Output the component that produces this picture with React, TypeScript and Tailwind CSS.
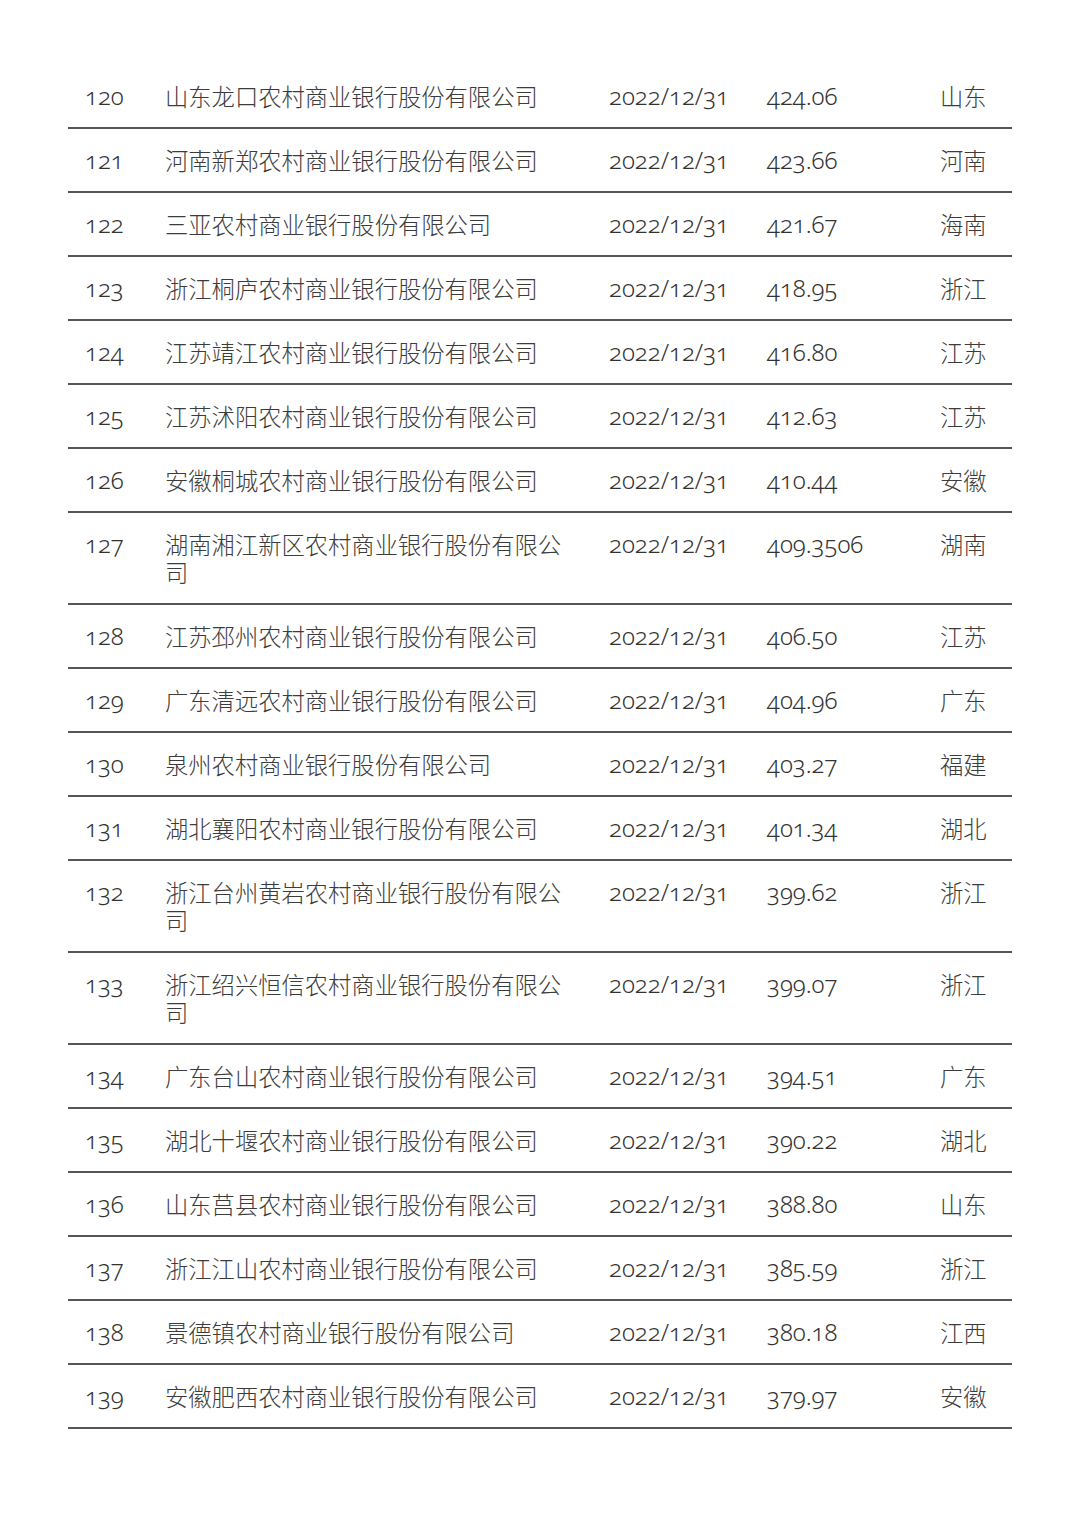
import React from "react";

const rows: [string, string, string, string][] = [
  ["120", "山东龙口农村商业银行股份有限公司", "424.06", "山东"],
  ["121", "河南新郑农村商业银行股份有限公司", "423.66", "河南"],
  ["122", "三亚农村商业银行股份有限公司", "421.67", "海南"],
  ["123", "浙江桐庐农村商业银行股份有限公司", "418.95", "浙江"],
  ["124", "江苏靖江农村商业银行股份有限公司", "416.80", "江苏"],
  ["125", "江苏沭阳农村商业银行股份有限公司", "412.63", "江苏"],
  ["126", "安徽桐城农村商业银行股份有限公司", "410.44", "安徽"],
  ["127", "湖南湘江新区农村商业银行股份有限公司", "409.3506", "湖南"],
  ["128", "江苏邳州农村商业银行股份有限公司", "406.50", "江苏"],
  ["129", "广东清远农村商业银行股份有限公司", "404.96", "广东"],
  ["130", "泉州农村商业银行股份有限公司", "403.27", "福建"],
  ["131", "湖北襄阳农村商业银行股份有限公司", "401.34", "湖北"],
  ["132", "浙江台州黄岩农村商业银行股份有限公司", "399.62", "浙江"],
  ["133", "浙江绍兴恒信农村商业银行股份有限公司", "399.07", "浙江"],
  ["134", "广东台山农村商业银行股份有限公司", "394.51", "广东"],
  ["135", "湖北十堰农村商业银行股份有限公司", "390.22", "湖北"],
  ["136", "山东莒县农村商业银行股份有限公司", "388.80", "山东"],
  ["137", "浙江江山农村商业银行股份有限公司", "385.59", "浙江"],
  ["138", "景德镇农村商业银行股份有限公司", "380.18", "江西"],
  ["139", "安徽肥西农村商业银行股份有限公司", "379.97", "安徽"],
];

const num = "font-['Noto_Sans','Liberation_Sans',sans-serif] font-[350] oldstyle-nums text-[24px] leading-[28px] text-[#333]";
const cjk = "font-['Noto_Sans_CJK_SC',sans-serif] font-light text-[23.3px] leading-[28px] text-[#3c3c3c]";

export default function App() {
  return (
    <div className="w-[1080px] h-[1528px] bg-white pt-[65px]">
      <div className="ml-[68px] w-[944px]">
        {rows.map(([n, name, v, p]) => (
          <div
            key={n}
            className="grid grid-cols-[97px_444px_158px_173px_72px] items-start pt-[17px] pb-[17px] border-b-2 border-[#555]"
          >
            <div className={`pl-[17px] ${num}`}>{n}</div>
            <div className={`${cjk} w-[408px]`}>{name}</div>
            <div className={num}>2022/12/31</div>
            <div className={num}>{v}</div>
            <div className={cjk}>{p}</div>
          </div>
        ))}
      </div>
    </div>
  );
}
